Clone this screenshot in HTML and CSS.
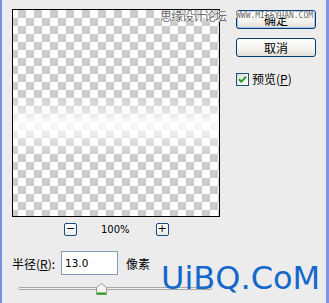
FILE: index.html
```html
<!DOCTYPE html>
<html>
<head>
<meta charset="utf-8">
<link rel="stylesheet" href="styles.css">
</head>
<body>
<div class="window">
  <div class="main">
    <div class="left">
      <div class="preview"><div class="blur"></div></div>
      <div class="zoomrow">
        <span class="zbtn">&minus;</span>
        <span class="zpct">100%</span>
        <span class="zbtn">+</span>
      </div>
    </div>
    <div class="side">
      <button class="btn default">确定</button>
      <button class="btn">取消</button>
      <label class="check">
        <span class="box"><svg width="11" height="11" viewBox="0 0 11 11"><path d="M2 5.2 L4.3 7.6 L9 2.8" fill="none" stroke="#21a121" stroke-width="2"/></svg></span>
        <span class="cklabel">预览(<u>P</u>)</span>
      </label>
    </div>
  </div>
  <div class="radius">
    <span class="rlabel">半径(<u>R</u>):</span>
    <span class="input">13.0</span>
    <span class="unit">像素</span>
  </div>
  <div class="slider">
    <div class="track"></div>
    <svg class="thumb" width="11" height="12" viewBox="0 0 11 12"><path d="M0.5 4.5 L5.5 0.5 L10.5 4.5 L10.5 11.5 L0.5 11.5 Z" fill="#f4f4f0" stroke="#9a9890"/><rect x="1" y="9.5" width="9" height="2" fill="#21a121"/></svg>
  </div>
  <div class="wm-cn">思缘设计论坛</div>
  <div class="wm-url">WWW.MISSYUAN.COM</div>
  <div class="wm-big">UiBQ.CoM</div>
</div>
</body>
</html>
```
FILE: styles.css
```css
html, body {
  margin: 0;
  padding: 0;
}
body {
  width: 329px;
  height: 303px;
  overflow: hidden;
  background: #ececec;
  font-family: "DejaVu Sans", "Noto Sans CJK SC", sans-serif;
  color: #000;
}
.window {
  position: relative;
  box-sizing: border-box;
  height: 303px;
  border-left: 2px solid #7590e0;
  border-right: 3px solid #7d95e2;
  padding-left: 10px;
}
.main {
  display: flex;
  padding-top: 9px;
}
.left {
  width: 208px;
}
.preview {
  position: relative;
  box-sizing: border-box;
  width: 208px;
  height: 208px;
  border: 1px solid #000;
  background-color: #fff;
  background-image: conic-gradient(#cccccc 25%, #ffffff 0 50%, #cccccc 0 75%, #ffffff 0);
  background-size: 16px 16px;
  background-position: -3px 0;
}
.blur {
  position: absolute;
  inset: 0;
  background: linear-gradient(to bottom,
    rgba(255,255,255,0) 84px,
    rgba(255,255,255,0.35) 98px,
    rgba(255,255,255,0.8) 110px,
    rgba(255,255,255,0.85) 117px,
    rgba(255,255,255,0.4) 130px,
    rgba(255,255,255,0) 146px);
}
.zoomrow {
  display: flex;
  align-items: center;
  margin-top: 6px;
  padding-left: 52px;
  height: 13px;
}
.zbtn {
  box-sizing: border-box;
  width: 13px;
  height: 13px;
  border: 1px solid #1c4a80;
  border-radius: 2px;
  background: linear-gradient(#ffffff, #ecebe6);
  font-size: 11px;
  line-height: 10px;
  text-align: center;
  font-family: "DejaVu Sans", sans-serif;
}
.zpct {
  font-size: 10px;
  margin: 0 26px 0 24px;
  line-height: 13px;
}
.side {
  display: flex;
  flex-direction: column;
  margin-left: 16px;
  padding-top: 1px;
}
.btn {
  box-sizing: border-box;
  width: 80px;
  height: 19px;
  margin: 0 0 9px 0;
  padding: 1px 0 0 0;
  border: 1px solid #003c74;
  border-radius: 3px;
  background: linear-gradient(#ffffff 0%, #f3f2ee 60%, #e2dfd6 100%);
  font-family: "Noto Sans CJK SC", sans-serif;
  font-size: 12px;
  line-height: 16px;
  color: #000;
}
.btn.default {
  box-shadow: inset 0 0 0 1px #a9c2ef;
}
.check {
  display: flex;
  align-items: center;
  margin-top: 6px;
  height: 14px;
}
.box {
  box-sizing: border-box;
  width: 13px;
  height: 13px;
  border: 1px solid #1c5180;
  background: linear-gradient(135deg, #dcdcd7, #ffffff);
  display: flex;
}
.cklabel {
  margin-left: 3px;
  font-family: "Noto Sans CJK SC", sans-serif;
  font-size: 12px;
  line-height: 14px;
}
.radius {
  display: flex;
  align-items: center;
  margin-top: 15px;
  height: 24px;
  font-family: "Noto Sans CJK SC", sans-serif;
  font-size: 12px;
}
.rlabel {
  width: 49px;
}
.input {
  box-sizing: border-box;
  width: 57px;
  height: 24px;
  border: 1px solid #7f9db9;
  background: #fff;
  padding-left: 3px;
  font-family: "DejaVu Sans", sans-serif;
  font-size: 10.5px;
  line-height: 22px;
}
.unit {
  margin-left: 8px;
}
.slider {
  position: relative;
  margin-top: 8px;
  height: 12px;
  margin-left: 6px;
  width: 194px;
}
.track {
  position: absolute;
  left: 0;
  right: 0;
  top: 4px;
  height: 3px;
  box-sizing: border-box;
  border: 1px solid #a9a79f;
  border-radius: 2px;
  background: #f4f3ee;
}
.thumb {
  position: absolute;
  left: 78px;
  top: 0;
}
.wm-cn {
  position: absolute;
  left: 158px;
  top: 7px;
  font-family: "Noto Sans CJK SC", sans-serif;
  font-size: 12px;
  letter-spacing: -1px;
  color: #6a6a6a;
  text-shadow: 0 0 1px #fff, 0 0 1px #fff, 1px 0 0 #fff, -1px 0 0 #fff;
}
.wm-url {
  position: absolute;
  left: 234px;
  top: 11px;
  font-family: "DejaVu Sans Mono", monospace;
  font-size: 8px;
  color: #6a6a6a;
  text-shadow: 0 0 1px #fff, 1px 0 0 #fff, -1px 0 0 #fff;
}
.wm-big {
  position: absolute;
  left: 159px;
  top: 262px;
  font-family: "DejaVu Sans", sans-serif;
  font-size: 32px;
  line-height: 32px;
  color: #1468cc;
}
```
